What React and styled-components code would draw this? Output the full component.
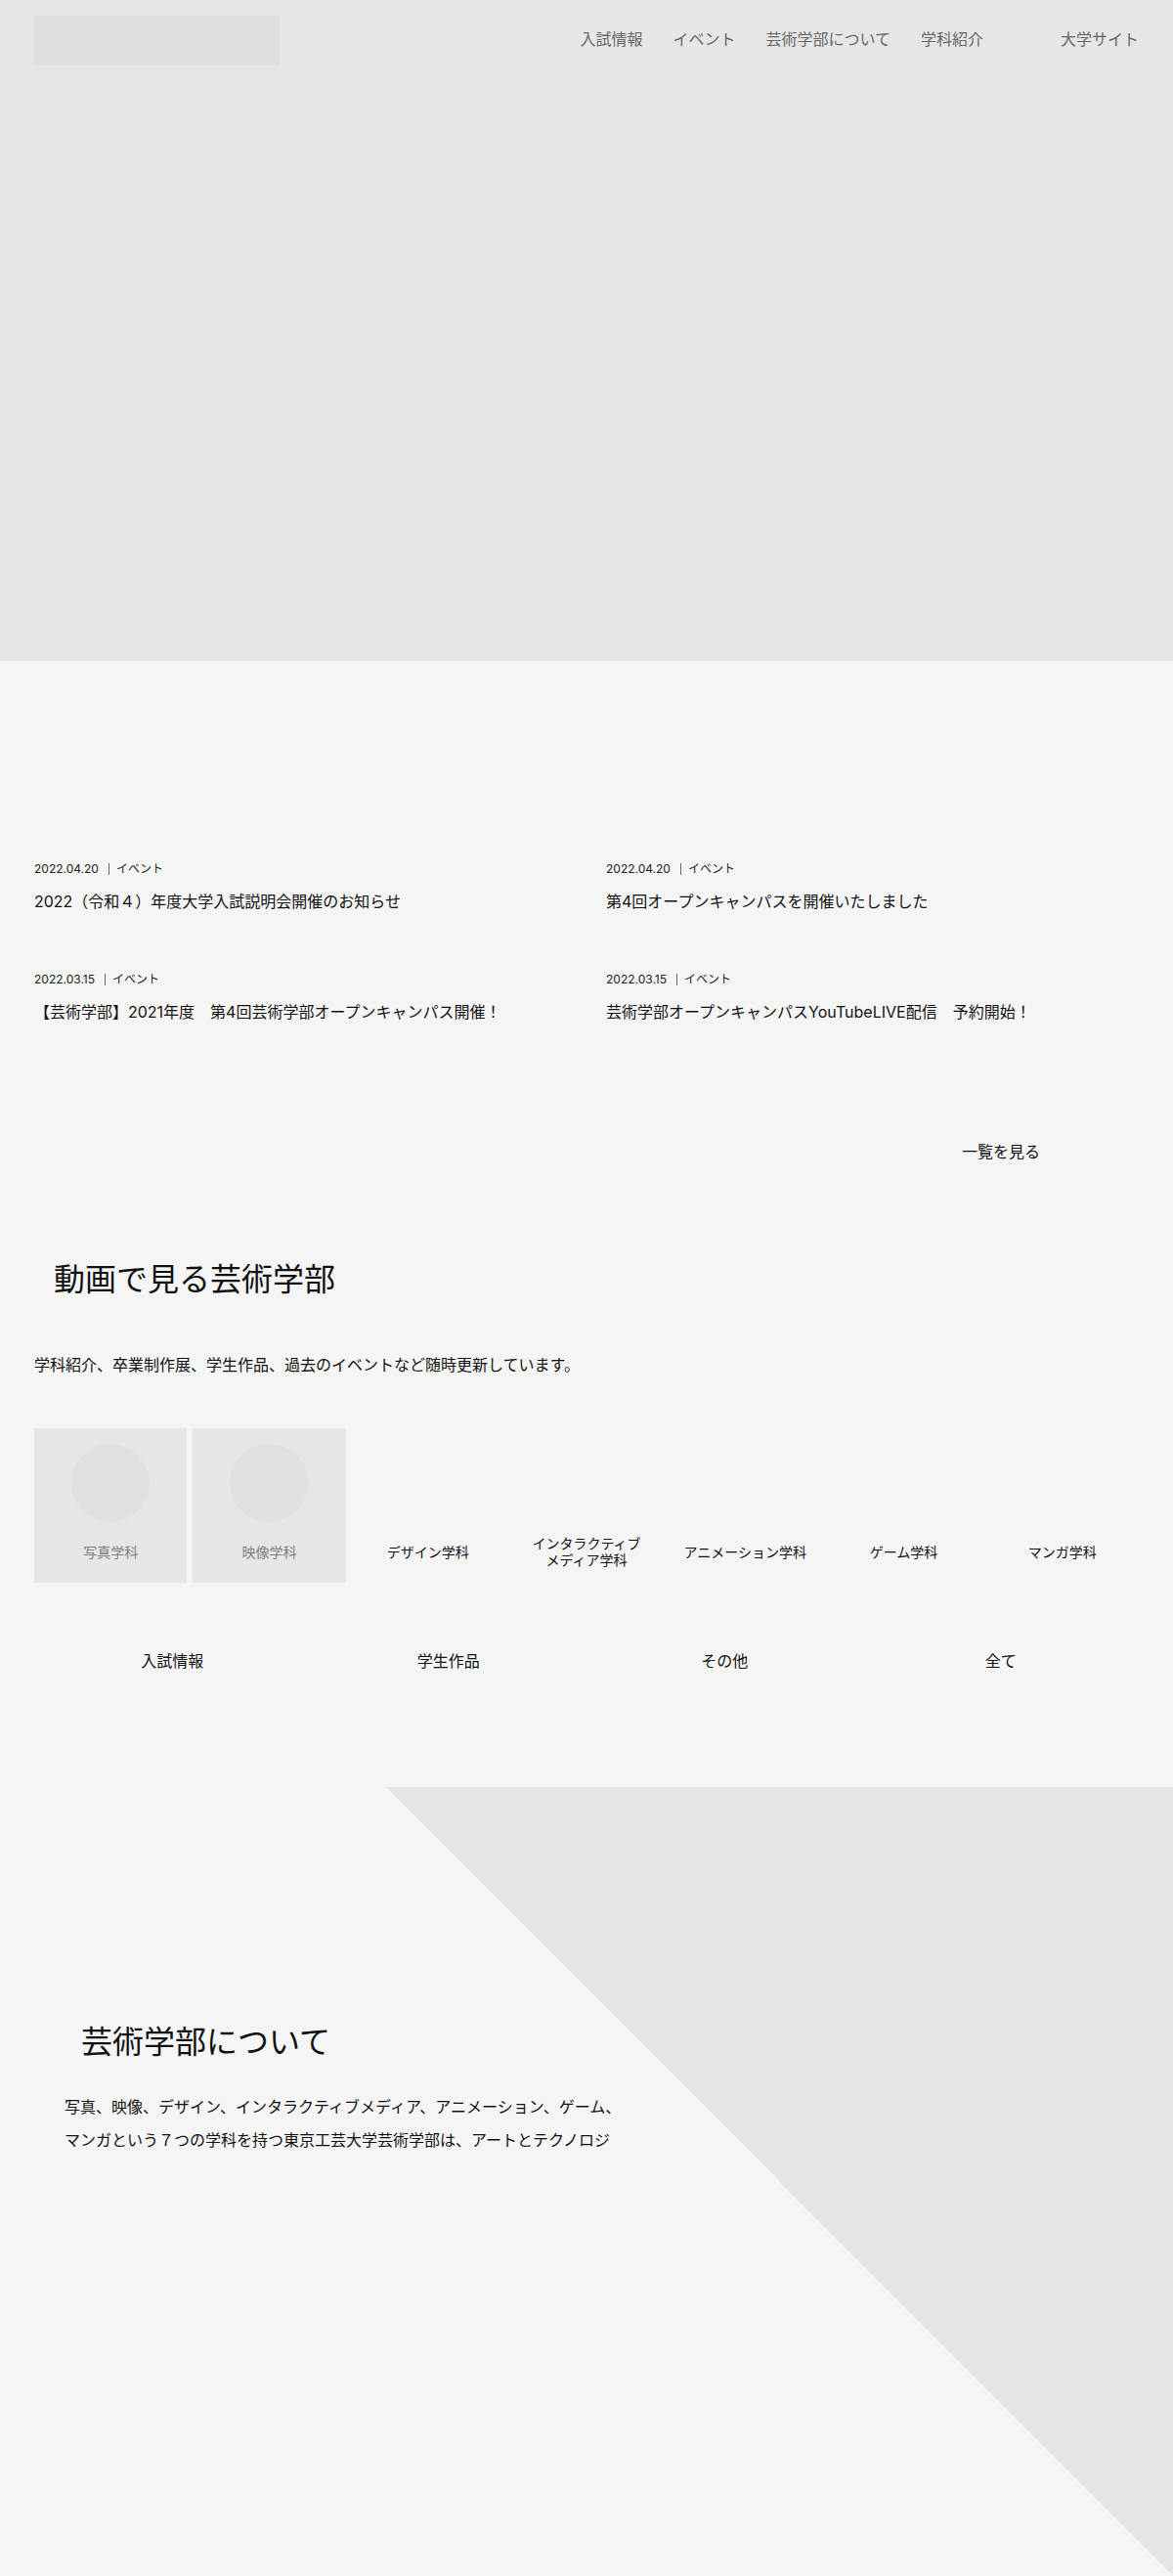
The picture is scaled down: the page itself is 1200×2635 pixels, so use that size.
import React from 'react';
import styled, {createGlobalStyle} from 'styled-components';

const GlobalStyle = createGlobalStyle`
  html, body {
    margin: 0;
    padding: 0;
    background: #f5f5f5;
  }
  body {
    font-family: Inter, "Noto Sans CJK JP", "Noto Sans", sans-serif;
    color: #111;
  }
  * {
    box-sizing: border-box;
  }
`;

const Hero = styled.section`
  height: 676px;
  background: #e6e6e6;
`;

const Header = styled.header`
  display: flex;
  align-items: center;
  padding: 16px 35px 0;
`;

const Logo = styled.div`
  width: 251px;
  height: 51px;
  background: #dfdfdf;
`;

const Nav = styled.nav`
  display: flex;
  align-items: center;
  gap: 31px;
  margin-left: auto;
  padding-bottom: 4px;
`;

const NavLink = styled.a`
  font-size: 16px;
  line-height: 24px;
  color: #666;
  text-decoration: none;
  margin-left: ${p => (p.$far ? '48px' : '0')};
`;

const Container = styled.div`
  padding: 0 35px;
`;

const NewsSection = styled(Container)`
  padding-top: 204px;
`;

const NewsGrid = styled.div`
  display: grid;
  grid-template-columns: 1fr 1fr;
  column-gap: 40px;
  row-gap: 59px;
`;

const NewsItem = styled.article`
  display: flex;
  flex-direction: column;
  gap: 12px;
`;

const Meta = styled.div`
  display: flex;
  align-items: center;
  font-size: 12px;
  line-height: 18px;
  color: #222;
`;

const Category = styled.span`
  margin-left: 10px;
  padding-left: 7px;
  border-left: 1px solid #666;
  line-height: 12px;
`;

const NewsTitle = styled.h3`
  margin: 0;
  font-size: 16px;
  line-height: 24px;
  font-weight: 400;
  color: #111;
`;

const MoreRow = styled.div`
  display: flex;
  justify-content: flex-end;
  margin-top: 119px;
  padding-right: 101px;
`;

const MoreLink = styled.a`
  font-size: 16px;
  line-height: 24px;
  color: #111;
  text-decoration: none;
`;

const SectionTitle = styled.h2`
  margin: ${p => p.$top || '0'} 0 0;
  padding-left: ${p => p.$indent || '20px'};
  font-size: 32px;
  line-height: 45px;
  font-weight: 400;
  color: #111;
`;

const Lead = styled.p`
  margin: 53px 0 0;
  font-size: 16px;
  line-height: 24px;
  color: #111;
`;

const DeptRow = styled.div`
  display: flex;
  gap: 6px;
  margin-top: 53px;
`;

const DeptCard = styled.a`
  flex: 1;
  height: 158px;
  padding-top: 16px;
  display: flex;
  flex-direction: column;
  align-items: center;
  background: ${p => (p.$filled ? '#e6e6e6' : 'transparent')};
  text-decoration: none;
`;

const DeptThumb = styled.div`
  width: 80px;
  height: 80px;
  border-radius: 50%;
  background: ${p => (p.$filled ? '#e0e0e0' : 'transparent')};
`;

const DeptLabel = styled.span`
  flex: 1;
  display: flex;
  align-items: center;
  justify-content: center;
  text-align: center;
  font-size: 14px;
  line-height: 17px;
  padding-bottom: 2px;
  color: ${p => (p.$filled ? '#808080' : '#111')};
`;

const TagRow = styled.div`
  display: grid;
  grid-template-columns: repeat(4, 1fr);
  margin-top: 68px;
`;

const Tag = styled.a`
  text-align: center;
  font-size: 16px;
  line-height: 24px;
  color: #111;
  text-decoration: none;
`;

const About = styled.section`
  margin-top: 117px;
  height: 807px;
  padding: 238px 0 0 66px;
  background-image: linear-gradient(to top right, transparent 50%, #e6e6e6 50%);
  background-size: 805px 100%;
  background-position: right top;
  background-repeat: no-repeat;
`;

const AboutText = styled.p`
  margin: 27px 0 0;
  font-size: 16px;
  line-height: 34px;
  white-space: nowrap;
  color: #111;
`;

const news = [
    {date: '2022.04.20', cat: 'イベント', title: '2022（令和４）年度大学入試説明会開催のお知らせ'},
    {date: '2022.04.20', cat: 'イベント', title: '第4回オープンキャンパスを開催いたしました'},
    {date: '2022.03.15', cat: 'イベント', title: '【芸術学部】2021年度　第4回芸術学部オープンキャンパス開催！'},
    {date: '2022.03.15', cat: 'イベント', title: '芸術学部オープンキャンパスYouTubeLIVE配信　予約開始！'},
];

const depts = [
    {name: '写真学科', filled: true},
    {name: '映像学科', filled: true},
    {name: 'デザイン学科'},
    {name: ['インタラクティブ', 'メディア学科']},
    {name: 'アニメーション学科'},
    {name: 'ゲーム学科'},
    {name: 'マンガ学科'},
];

const tags = ['入試情報', '学生作品', 'その他', '全て'];

export default function App() {
    return (
        <>
            <GlobalStyle/>
            <Hero>
                <Header>
                    <Logo/>
                    <Nav>
                        <NavLink href="#">入試情報</NavLink>
                        <NavLink href="#">イベント</NavLink>
                        <NavLink href="#">芸術学部について</NavLink>
                        <NavLink href="#">学科紹介</NavLink>
                        <NavLink href="#" $far>大学サイト</NavLink>
                    </Nav>
                </Header>
            </Hero>

            <NewsSection>
                <NewsGrid>
                    {news.map((n, i) => (
                        <NewsItem key={i}>
                            <Meta>
                                {n.date}
                                <Category>{n.cat}</Category>
                            </Meta>
                            <NewsTitle>{n.title}</NewsTitle>
                        </NewsItem>
                    ))}
                </NewsGrid>
                <MoreRow>
                    <MoreLink href="#">一覧を見る</MoreLink>
                </MoreRow>

                <SectionTitle $top="96px">動画で見る芸術学部</SectionTitle>
                <Lead>学科紹介、卒業制作展、学生作品、過去のイベントなど随時更新しています。</Lead>

                <DeptRow>
                    {depts.map((d, i) => (
                        <DeptCard href="#" key={i} $filled={d.filled}>
                            <DeptThumb $filled={d.filled}/>
                            <DeptLabel $filled={d.filled}>
                                {Array.isArray(d.name)
                                    ? <span>{d.name[0]}<br/>{d.name[1]}</span>
                                    : d.name}
                            </DeptLabel>
                        </DeptCard>
                    ))}
                </DeptRow>

                <TagRow>
                    {tags.map(t => <Tag href="#" key={t}>{t}</Tag>)}
                </TagRow>
            </NewsSection>

            <About>
                <SectionTitle $indent="17px">芸術学部について</SectionTitle>
                <AboutText>
                    写真、映像、デザイン、インタラクティブメディア、アニメーション、ゲーム、<br/>
                    マンガという７つの学科を持つ東京工芸大学芸術学部は、アートとテクノロジ
                </AboutText>
            </About>
        </>
    );
}
